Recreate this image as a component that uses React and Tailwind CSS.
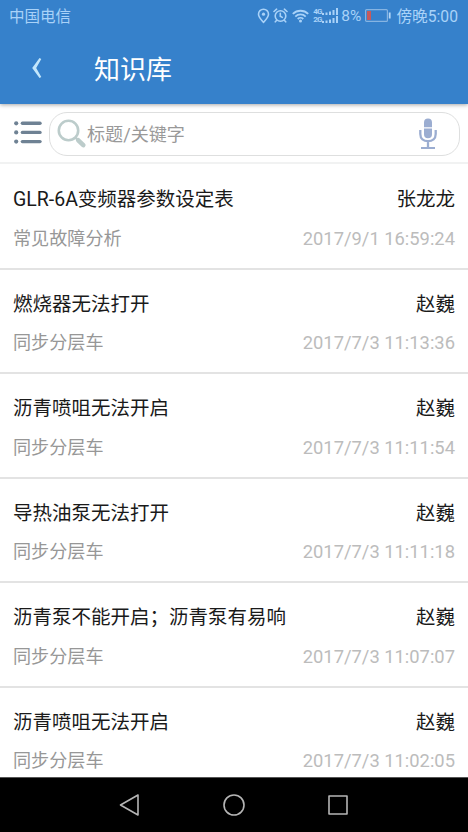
import React, { useState } from "react";

const articles = [
  { id: 1, title: "GLR-6A变频器参数设定表", author: "张龙龙", category: "常见故障分析", time: "2017/9/1 16:59:24" },
  { id: 2, title: "燃烧器无法打开", author: "赵巍", category: "同步分层车", time: "2017/7/3 11:13:36" },
  { id: 3, title: "沥青喷咀无法开启", author: "赵巍", category: "同步分层车", time: "2017/7/3 11:11:54" },
  { id: 4, title: "导热油泵无法打开", author: "赵巍", category: "同步分层车", time: "2017/7/3 11:11:18" },
  { id: 5, title: "沥青泵不能开启；沥青泵有易响", author: "赵巍", category: "同步分层车", time: "2017/7/3 11:07:07" },
  { id: 6, title: "沥青喷咀无法开启", author: "赵巍", category: "同步分层车", time: "2017/7/3 11:02:05" },
];

const LocationIcon = () => (
  <svg width="13" height="16" viewBox="0 0 13 16" fill="none" stroke="currentColor" strokeWidth="1.6">
    <path d="M6.5 14.3C4 11.4 1.5 9 1.5 6.2a5 5 0 0 1 10 0c0 2.8-2.5 5.2-5 8.1z" />
    <circle cx="6.5" cy="6.2" r="1.6" fill="currentColor" stroke="none" />
  </svg>
);

const AlarmIcon = () => (
  <svg width="15" height="15" viewBox="0 0 15 15" fill="none" stroke="currentColor" strokeWidth="1.6" strokeLinecap="round">
    <circle cx="7.5" cy="8" r="5.3" />
    <path d="M7.3 5.2v3l2 1.2M1 3.5 3.6 1.2M14 3.5 11.4 1.2M3.5 12.5l-1.2 1.3M11.5 12.5l1.2 1.3" />
  </svg>
);

const WifiIcon = () => (
  <svg width="17" height="14" viewBox="0 0 17 14" fill="none" stroke="currentColor" strokeWidth="1.8">
    <path d="M.8 4.9a11 11 0 0 1 15.4 0M3.3 7.6a7.4 7.4 0 0 1 10.4 0M5.7 10a4 4 0 0 1 5.6 0" />
    <circle cx="8.5" cy="12" r="1.5" fill="currentColor" stroke="none" />
  </svg>
);

const SignalBars = () => (
  <svg width="17" height="7" viewBox="0 0 17 7" fill="currentColor">
    <rect x="0" y="5" width="2" height="2" />
    <rect x="3.5" y="4.5" width="2" height="2.5" />
    <rect x="7" y="3.5" width="2" height="3.5" />
    <rect x="10.5" y="2" width="2" height="5" />
    <rect x="14" y="0" width="2" height="7" />
  </svg>
);

const BatteryIcon = () => (
  <svg width="26" height="13" viewBox="0 0 26 13" fill="none">
    <rect x=".6" y=".6" width="21.8" height="11.8" rx="1" stroke="#86b4e2" strokeWidth="1.2" />
    <rect x="2" y="2" width="4" height="9" fill="#c65a5c" />
    <rect x="23.8" y="3.5" width="1.8" height="6" fill="#b3d7f8" />
  </svg>
);

const MenuIcon = () => (
  <svg width="28" height="24" viewBox="0 0 28 24" fill="#6f8294">
    {[2.3, 11.4, 20.6].map((y) => (
      <g key={y}>
        <circle cx="2.2" cy={y} r="2.1" />
        <rect x="6.7" y={y - 1.7} width="21" height="3.4" rx="1.7" />
      </g>
    ))}
  </svg>
);

const SearchIcon = () => (
  <svg width="30" height="30" viewBox="0 0 30 30" fill="none" stroke="#bccccb" strokeLinecap="round">
    <circle cx="11.5" cy="11.5" r="9.7" strokeWidth="2.6" />
    <path d="m18.8 18.8 2 2" strokeWidth="2.4" />
    <path d="m21.3 21.3 5 4.8" strokeWidth="4.6" />
  </svg>
);

const MicIcon = () => (
  <svg width="18" height="32" viewBox="0 0 18 32" fill="#9badd1">
    <path d="M5 9.3V4.5a4 4 0 0 1 8 0v4.8zM5 10.5h8v5.7a4 4 0 0 1-8 0z" />
    <path d="M1.3 12v4c0 4.7 3.3 7.2 7.7 7.2s7.7-2.5 7.7-7.2v-4M9 23v7.2" fill="none" stroke="#9badd1" strokeWidth="2.3" />
    <rect x="2" y="29" width="14" height="2" />
  </svg>
);

const StatusBar = () => (
  <div className="flex h-8 items-center justify-between pl-[9px] pr-[10px] text-[15.5px] text-[#a9d2f8]">
    <span className="pt-[3px] leading-none">中国电信</span>
    <div className="flex items-center leading-none">
      <LocationIcon />
      <span className="ml-[3px]">
        <AlarmIcon />
      </span>
      <span className="ml-[4px]">
        <WifiIcon />
      </span>
      <div className="ml-[4px] flex flex-col gap-px text-[8px] font-bold leading-[7px]">
        <div className="flex items-center">
          <span className="w-[9px] tracking-[-0.1em]">4G</span>
          <SignalBars />
        </div>
        <div className="flex items-center">
          <span className="w-[9px] tracking-[-0.1em]">2G</span>
          <SignalBars />
        </div>
      </div>
      <span className="ml-[2px] pt-px text-[15.5px]">8%</span>
      <span className="ml-[4px]">
        <BatteryIcon />
      </span>
      <span className="ml-[5px] pt-px text-[15.7px]">傍晚5:00</span>
    </div>
  </div>
);

const ArticleRow = ({ article }) => (
  <li className="h-[104.5px] shrink-0 border-b-2 border-[#e3e3e3] px-[13px] pt-[22px]">
    <div className="flex justify-between text-[19.5px] leading-[26px] text-[#1a1a1a]">
      <span>{article.title}</span>
      <span>{article.author}</span>
    </div>
    <div className="mt-[12.5px] flex justify-between text-[18.1px] leading-[26px]">
      <span className="text-[#979797]">{article.category}</span>
      <span className="text-[18.35px] text-[#bcbcbc]">{article.time}</span>
    </div>
  </li>
);

const App = () => {
  const [keyword, setKeyword] = useState("");

  return (
    <div className="flex h-[832px] w-[468px] flex-col overflow-hidden bg-white font-['Roboto','Noto_Sans_CJK_SC',sans-serif]">
      {/* Header */}
      <header className="z-10 h-[104px] shrink-0 bg-[#3681cb] shadow-[0_1px_4px_rgba(0,0,0,0.35)]">
        <StatusBar />
        <div className="flex h-[72px] items-center pl-[32px]">
          <svg width="10" height="20" viewBox="0 0 10 20" fill="#c3e6fb">
            <path d="M7.5 0 9.3 1 4.2 10l5.1 9-1.8 1L.2 10z" />
          </svg>
          <h1 className="ml-[52px] pt-[3px] text-[26px] leading-9 text-white">知识库</h1>
        </div>
      </header>

      {/* Search */}
      <div className="flex h-[60px] shrink-0 items-center border-b-2 border-[#f1f2f2] pl-[14px] pr-[8px]">
        <button className="shrink-0">
          <MenuIcon />
        </button>
        <div className="ml-[7px] mt-[2px] flex h-[44px] flex-1 items-center rounded-[18px] border border-[#dedfdf] pl-[7px] pr-[22px]">
          <SearchIcon />
          <input
            type="text"
            value={keyword}
            onChange={(e) => setKeyword(e.target.value)}
            placeholder="标题/关键字"
            className="min-w-0 flex-1 pt-[2px] text-[18.1px] outline-none placeholder:text-[#999]"
          />
          <MicIcon />
        </div>
      </div>

      {/* Article list */}
      <ul className="flex min-h-0 flex-1 flex-col overflow-hidden pt-px">
        {articles.map((article) => (
          <ArticleRow key={article.id} article={article} />
        ))}
      </ul>

      {/* Android navigation */}
      <nav className="flex h-[55px] shrink-0 items-center justify-center gap-[82px] border-t border-[#555] bg-black text-[#b5b5b5]">
        <svg width="22" height="22" viewBox="0 0 22 22" fill="none" stroke="currentColor" strokeWidth="1.6" strokeLinejoin="round">
          <path d="M19 1v20L1.5 11z" />
        </svg>
        <svg width="22" height="22" viewBox="0 0 22 22" fill="none" stroke="currentColor" strokeWidth="1.6">
          <circle cx="11" cy="11" r="10" />
        </svg>
        <svg width="22" height="22" viewBox="0 0 22 22" fill="none" stroke="currentColor" strokeWidth="1.6" strokeLinejoin="round">
          <rect x="2" y="2" width="18" height="18" />
        </svg>
      </nav>
    </div>
  );
};

export default App;
